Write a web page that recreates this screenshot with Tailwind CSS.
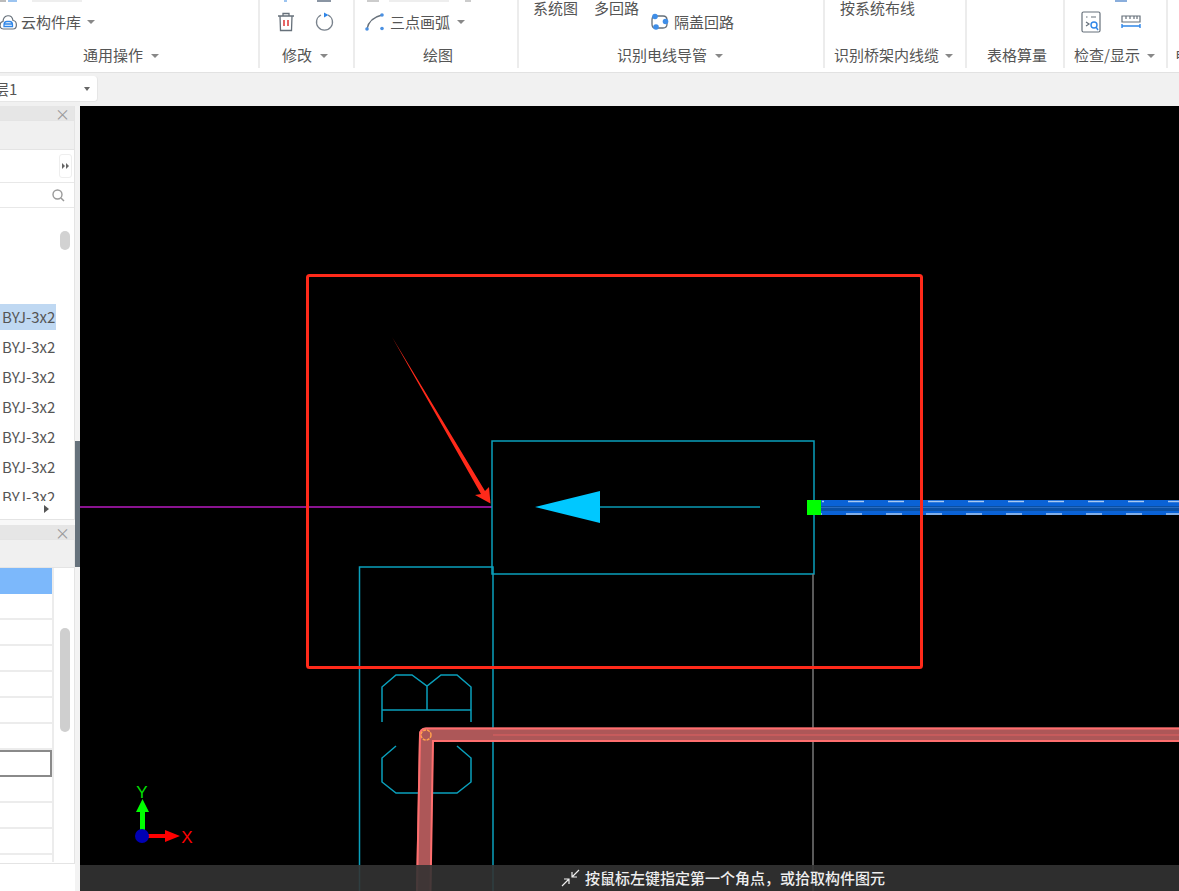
<!DOCTYPE html>
<html lang="zh-CN">
<head>
    <meta charset="UTF-8">
    <title>Ribbon CAD</title>
    <script src="https://cdn.jsdelivr.net/npm/@tailwindcss/browser@4"></script>
</head>
<body class="w-[1179px] h-[891px] overflow-hidden bg-[#f1f1f1] font-['Noto_Sans_CJK_SC','Noto_Sans',sans-serif] text-[15px] text-[#555]">
    <!-- ribbon -->
    <header class="flex h-[73px] bg-white border-b border-[#e2e2e2] overflow-hidden">
        <section class="w-[260px] h-[68px] shrink-0 flex flex-col border-r-2 border-[#ececec]">
            <div class="h-[44px] overflow-hidden">
                <div class="flex h-[2px]"><span class="w-[6px] bg-[#bbb]"></span><span class="w-[9px] ml-[2px] bg-[#9cc4f0]"></span><span class="w-[50px] ml-[15px] bg-[#eee]"></span></div>
                <div class="flex items-center h-[20px] mt-[10px]">
                    <svg class="w-[18px] h-[18px] -ml-[1px]" viewBox="0 0 18 18" fill="none"><path d="M4.500 16 C0 16 0 9 4 8.500 C4.500 1 13 1 14 7.500 C18.500 8 18.500 16 14 16 Z" stroke="#66707a" stroke-width="1.200"/><path d="M5 12 Q5 8.500 8 8.500 H10.500 Q13.500 8.500 13.500 12 V13.500 H5 Z M5 11 H13.500" stroke="#2f86e8" stroke-width="1.300"/></svg>
                    <span class="ml-[4px] leading-[20px]">云构件库</span>
                    <span class="ml-[6px] w-0 h-0 border-x-[4px] border-x-transparent border-t-[4px] border-t-[#888]"></span>
                </div>
            </div>
            <div class="flex items-center h-[23px] pl-[83px]"><span>通用操作</span><span class="ml-[8px] w-0 h-0 border-x-[4px] border-x-transparent border-t-[4px] border-t-[#888]"></span></div>
        </section>
        <section class="w-[95px] h-[68px] shrink-0 flex flex-col border-r-2 border-[#ececec]">
            <div class="h-[44px] overflow-hidden">
                <div class="flex h-[2px]"><span class="ml-[24px] w-[3px] bg-[#9cc4f0]"></span><span class="ml-[30px] w-[14px] bg-[#8a95a3]"></span></div>
                <div class="flex items-center h-[20px] mt-[10px] pl-[17px]">
                    <svg class="w-[18px] h-[20px]" viewBox="0 0 18 20" fill="none"><path d="M1 4 H17 M6 4 V1.500 H12 V4 M3 4 L3.500 18.500 H14.500 L15 4" stroke="#66707a" stroke-width="1.300"/><path d="M7 8 V14 M11 8 V14" stroke="#e04040" stroke-width="1.600"/></svg>
                    <svg class="w-[20px] h-[20px] ml-[20px]" viewBox="0 0 20 20" fill="none"><path d="M13 3 A8 8 0 1 1 6 3" stroke="#7a838d" stroke-width="1.300"/><path d="M9 0.500 L13.500 3 L9 5.500 Z" fill="#2f86e8"/></svg>
                </div>
            </div>
            <div class="flex items-center h-[23px] pl-[22px]"><span>修改</span><span class="ml-[8px] w-0 h-0 border-x-[4px] border-x-transparent border-t-[4px] border-t-[#888]"></span></div>
        </section>
        <section class="w-[164px] h-[68px] shrink-0 flex flex-col border-r-2 border-[#ececec]">
            <div class="h-[44px] overflow-hidden">
                <div class="flex h-[2px]"><span class="ml-[12px] w-[12px] bg-[#ccc]"></span><span class="ml-[10px] w-[60px] bg-[#eee]"></span><span class="ml-[16px] w-[6px] bg-[#ccc]"></span></div>
                <div class="flex items-center h-[20px] mt-[10px] pl-[10px]">
                    <svg class="w-[20px] h-[20px]" viewBox="0 0 20 20" fill="none"><path d="M2 17 Q4 6 17 3" stroke="#66707a" stroke-width="1.300"/><circle cx="2" cy="17" r="1.800" fill="#4a90e2"/><circle cx="17" cy="3" r="1.800" fill="#4a90e2"/><circle cx="17" cy="16.500" r="1.800" fill="#4a90e2"/></svg>
                    <span class="ml-[5px] leading-[20px]">三点画弧</span>
                    <span class="ml-[7px] w-0 h-0 border-x-[4px] border-x-transparent border-t-[4px] border-t-[#888]"></span>
                </div>
            </div>
            <div class="h-[23px] flex items-center pl-[68px]">绘图</div>
        </section>
        <section class="w-[306px] h-[68px] shrink-0 flex flex-col border-r-2 border-[#ececec]">
            <div class="h-[44px] overflow-hidden">
                <div class="flex h-[16px] pl-[14px] leading-[16px]"><span>系统图</span><span class="ml-[16px]">多回路</span></div>
                <div class="flex items-center h-[20px] -mt-[4px] pl-[131px]">
                    <svg class="w-[19px] h-[18px]" viewBox="0 0 19 18" fill="none"><path d="M5 3 H13 Q17 3 17 7 V11 Q17 15 13 15 H5 Q2 15 2 11 V7 Q2 3 5 3 Z" stroke="#66707a" stroke-width="1.300"/><circle cx="5" cy="3.500" r="2.800" fill="#3f8ee8"/><circle cx="15.500" cy="8.500" r="2.800" fill="#3f8ee8"/><circle cx="6" cy="14" r="2.800" fill="#3f8ee8"/></svg>
                    <span class="ml-[5px] leading-[20px]">隔盖回路</span>
                </div>
            </div>
            <div class="flex items-center h-[23px] pl-[98px]"><span>识别电线导管</span><span class="ml-[8px] w-0 h-0 border-x-[4px] border-x-transparent border-t-[4px] border-t-[#888]"></span></div>
        </section>
        <section class="w-[142px] h-[68px] shrink-0 flex flex-col border-r-2 border-[#ececec]">
            <div class="h-[44px] overflow-hidden"><div class="pl-[15px] leading-[16px]">按系统布线</div></div>
            <div class="flex items-center h-[23px] pl-[9px]"><span>识别桥架内线缆</span><span class="ml-[6px] w-0 h-0 border-x-[4px] border-x-transparent border-t-[4px] border-t-[#888]"></span></div>
        </section>
        <section class="w-[98px] h-[68px] shrink-0 flex flex-col border-r-2 border-[#ececec]">
            <div class="h-[44px]"></div>
            <div class="h-[23px] flex items-center pl-[20px]">表格算量</div>
        </section>
        <section class="w-[103px] h-[68px] shrink-0 flex flex-col border-r-2 border-[#ececec]">
            <div class="h-[44px] overflow-hidden">
                <div class="flex h-[2px]"><span class="ml-[50px] w-[12px] bg-[#8aaedc]"></span></div>
                <div class="flex items-center h-[20px] mt-[10px] pl-[16px]">
                    <svg class="w-[20px] h-[22px]" viewBox="0 0 20 22" fill="none"><rect x="1" y="1" width="18" height="20" rx="1.500" stroke="#66707a" stroke-width="1.200"/><path d="M5 6 H6.500 M10 6 H15 M5 11 L8 13 L5 15" stroke="#66707a" stroke-width="1.200"/><circle cx="13" cy="14" r="3" stroke="#2f86e8" stroke-width="1.400"/><path d="M15 16 L17 19" stroke="#2f86e8" stroke-width="1.400"/></svg>
                    <svg class="w-[20px] h-[16px] ml-[20px]" viewBox="0 0 20 16" fill="none"><path d="M1 2 H19 V8 H1 Z M5 2 V5 M9 2 V5 M13 2 V5 M16 2 V5" stroke="#66707a" stroke-width="1.200"/><path d="M1 12 H19 M1 10 V14 M19 10 V14" stroke="#2f86e8" stroke-width="1.400"/></svg>
                </div>
            </div>
            <div class="flex items-center h-[23px] pl-[9px]"><span>检查/显示</span><span class="ml-[7px] w-0 h-0 border-x-[4px] border-x-transparent border-t-[4px] border-t-[#888]"></span></div>
        </section>
        <section class="flex-1 h-[68px] flex flex-col overflow-hidden"><div class="h-[44px]"></div><div class="h-[23px] flex items-center pl-[7px] whitespace-nowrap">电</div></section>
    </header>

    <!-- layer selector -->
    <div class="flex items-center h-[33px] bg-[#f1f1f1]">
        <div class="flex items-center justify-between w-[98px] h-[26px] -mt-[1px] pt-[1px] bg-white rounded-r-[4px] border-r border-b border-[#e6e6e6] overflow-hidden">
            <span class="-ml-[6px] leading-[20px]">层1</span>
            <span class="mr-[7px] w-0 h-0 border-x-[3px] border-x-transparent border-t-[4px] border-t-[#666]"></span>
        </div>
    </div>

    <main class="flex h-[785px]">
        <!-- left panels -->
        <aside class="w-[80px] shrink-0 flex flex-col">
            <div class="flex flex-1 min-h-0">
                <div class="w-[75px] flex flex-col">
                    <div class="h-[414px] flex flex-col border-r border-b border-[#e4e4e4] bg-white overflow-hidden">
                        <div class="h-[14px] flex items-center justify-end pr-[4px] bg-[#e6e6e6] text-[#999] text-[15px] leading-none">×</div>
                        <div class="h-[30px] bg-[#f0f0f0] border-t border-b border-[#e4e4e4]"></div>
                        <div class="h-[33px] flex items-center justify-end pr-[2px] border-b border-[#e8e8e8]">
                            <div class="w-[13px] h-[24px] flex items-center justify-center gap-px bg-white border border-[#eee] rounded-[3px]">
                                <span class="w-0 h-0 border-y-[3px] border-y-transparent border-l-[3px] border-l-[#666]"></span>
                                <span class="w-0 h-0 border-y-[3px] border-y-transparent border-l-[3px] border-l-[#666]"></span>
                            </div>
                        </div>
                        <div class="h-[25px] flex items-center justify-end pr-[9px] border-b border-[#e8e8e8]">
                            <svg class="w-[13px] h-[13px]" viewBox="0 0 13 13" fill="none"><circle cx="5.500" cy="5.500" r="4.500" stroke="#999" stroke-width="1.400"/><path d="M9 9 L12 12" stroke="#999" stroke-width="1.500"/></svg>
                        </div>
                        <div class="relative flex-1 overflow-hidden">
                            <div class="absolute left-[60px] top-[23px] w-[10px] h-[19px] rounded-full bg-[#d2d2d2]"></div>
                            <div class="h-[96px]"></div>
                            <div class="w-[56px] h-[26px] bg-[#bfd8f2] flex items-center pl-[2px] text-[#555]">BYJ-3x2</div>
                            <div class="flex flex-col pl-[2px] pt-[7px] gap-[10px] leading-[20px] w-[60px] h-[171px] overflow-hidden text-[#555]">
                                <span>BYJ-3x2</span>
                                <span>BYJ-3x2</span>
                                <span>BYJ-3x2</span>
                                <span>BYJ-3x2</span>
                                <span>BYJ-3x2</span>
                                <span>BYJ-3x2</span>
                            </div>
                            <div class="absolute left-[44px] top-[297px] w-0 h-0 border-y-[4px] border-y-transparent border-l-[5px] border-l-[#555]"></div>
                        </div>
                    </div>
                    <div class="h-[5px] bg-[#f8f8f8]"></div>
                    <div class="h-[339px] flex flex-col border-r border-b border-[#e4e4e4] bg-white overflow-hidden">
                        <div class="h-[14px] flex items-center justify-end pr-[4px] bg-[#e6e6e6] text-[#999] text-[15px] leading-none">×</div>
                        <div class="h-[29px] bg-[#f0f0f0] border-t border-b border-[#e4e4e4]"></div>
                        <div class="relative flex-1">
                            <div class="absolute left-[60px] top-[60px] w-[10px] h-[104px] rounded-full bg-[#cfcfcf]"></div>
                            <div class="w-[54px] border-r-2 border-[#ececec]">
                                <div class="h-[26px] bg-[#7cb8fb]"></div>
                                <div class="h-[26px] border-b-2 border-[#ececec]"></div>
                                <div class="h-[26px] border-b-2 border-[#ececec]"></div>
                                <div class="h-[26px] border-b-2 border-[#ececec]"></div>
                                <div class="h-[26px] border-b-2 border-[#ececec]"></div>
                                <div class="h-[26px] border-b-2 border-[#ececec]"></div>
                                <div class="h-[26px] border-b-2 border-[#ececec]"></div>
                                <div class="h-[27px] border-2 border-l-0 border-[#8a8a8a]"></div>
                                <div class="h-[26px] border-b-2 border-[#ececec]"></div>
                                <div class="h-[26px] border-b-2 border-[#ececec]"></div>
                                <div class="h-[26px] border-b-2 border-[#ececec]"></div>
                                <div class="h-[7px]"></div>
                            </div>
                        </div>
                    </div>
                    <div class="flex-1 bg-white"></div>
                </div>
                <!-- splitter -->
                <div class="w-[5px] flex flex-col bg-[#f3f3f3]">
                    <div class="h-[335px]"></div>
                    <div class="h-[126px] bg-[#66727c]"></div>
                </div>
            </div>
        </aside>

        <!-- drawing canvas -->
        <div class="relative flex-1 bg-black overflow-hidden">
            <svg class="absolute inset-0 w-[1099px] h-[785px]" viewBox="80 106 1099 785" fill="none">
                <!-- wiring -->
                <path d="M78 507 H492" stroke="#8a1390" stroke-width="2"/>
                <path d="M600 507 H760" stroke="#0a9ab5" stroke-width="1.500"/>
                <rect x="492" y="441" width="322" height="133" stroke="#0aa0bc" stroke-width="1.500"/>
                <path d="M359.500 891 V567 H493 V891" stroke="#0aa0bc" stroke-width="1.500"/>
                <path d="M813 574 V891" stroke="#777" stroke-width="1.500"/>
                <path d="M535 507 L600 491 V523 Z" fill="#00c8ff"/>
                <!-- blue conduit -->
                <rect x="821" y="500" width="358" height="15" fill="#0a62d6"/>
                <rect x="821" y="506" width="358" height="5" fill="#0a4fa3"/>
                <path d="M821 507.500 H1179" stroke="#2a6cc0"/>
                <path d="M822 501.500 H1179" stroke="#a8c8f0" stroke-width="1.500" stroke-dasharray="16 24" stroke-dashoffset="-26"/>
                <path d="M820 514 H1179" stroke="#a8c8f0" stroke-width="1.500" stroke-dasharray="16 24" stroke-dashoffset="-26"/>
                <rect x="807" y="500" width="14" height="15" fill="#00ff00"/>
                <!-- fixture symbols -->
                <path d="M382 722 V687 L396 675 H412 L427 686 L441 675 H457 L471 687 V722 M382 710 H471 M427 686 V710" stroke="#0aa0bc" stroke-width="1.500"/>
                <path d="M396 746 L382 758 V782 L396 793 H457 L471 782 V758 L457 746" stroke="#0aa0bc" stroke-width="1.500"/>
                <!-- pink conduit -->
                <path d="M1179 727.500 H426 Q419 727.500 419 735 L416 891 H431 L433.500 742 H1179 Z" fill="#ad5758"/>
                <path d="M1179 728.500 H426 Q420 728.500 420 735 L417 891 M430.500 891 L433 741 H1179" stroke="#ff6f6f" stroke-width="2"/>
                <path d="M493 735 H1179" stroke="#e06060"/>
                <circle cx="426" cy="735" r="5" stroke="#ffa04d" stroke-width="1.500" stroke-dasharray="3 1"/>
                <!-- annotation -->
                <rect x="307.500" y="275.500" width="614" height="392" rx="2" stroke="#ff2a1a" stroke-width="3"/>
                <path d="M392 337 L485 491 L489 487 L490.500 503.500 L475 495 L481 494 Z" fill="#ff2a1a"/>
                <!-- axis gizmo -->
                <path d="M140 830 V812 H136 L142.500 799 L149 812 H145 V830 Z" fill="#00ff00"/>
                <path d="M146 834 H165 V830 L180 836 L165 842 V838 H146 Z" fill="#ff0000"/>
                <circle cx="142" cy="836" r="7" fill="#0000b4"/>
                <text x="142" y="798" fill="#00e000" font-size="17" text-anchor="middle" font-family="Liberation Sans">Y</text>
                <text x="187" y="843" fill="#ff0000" font-size="17" text-anchor="middle" font-family="Liberation Sans">X</text>
            </svg>
            <!-- status bar -->
            <div class="absolute left-0 right-0 bottom-0 h-[26px] bg-[#333]/90 flex items-center pl-[481px] gap-[5px] text-[#eee] text-[15px] font-medium">
                <svg class="w-[19px] h-[18px] -mt-[1px]" viewBox="0 0 19 18" fill="none"><path d="M18 1 L11 8 M11 3 V8 H16 M1 17 L8 10 M3 10 H8 V15" stroke="#eee" stroke-width="1.200"/></svg>
                <span>按鼠标左键指定第一个角点，或拾取构件图元</span>
            </div>
        </div>
    </main>
</body>
</html>
